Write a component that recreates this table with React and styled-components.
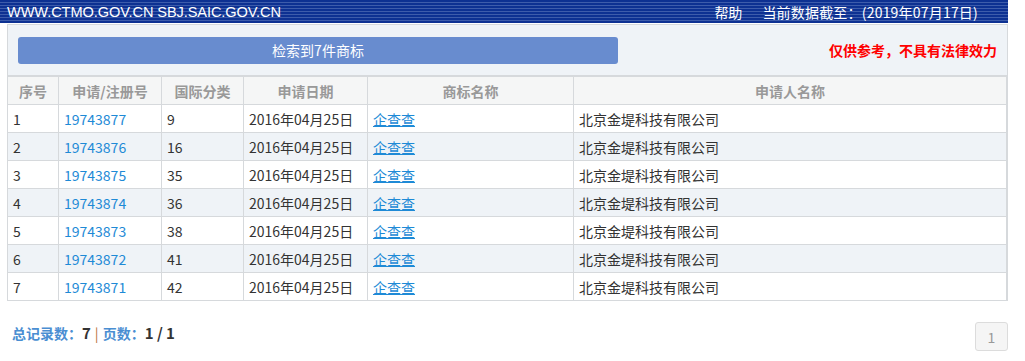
import React from "react";
import styled, { createGlobalStyle } from "styled-components";

const Global = createGlobalStyle`
  body {
    margin: 0;
    background: #fff;
    font-family: "Noto Sans CJK SC", "Liberation Sans", sans-serif;
    text-spacing-trim: space-all;
  }
`;

const Page = styled.div`
  width: 1008px;
`;

const TopBar = styled.div`
  height: 23px;
  display: flex;
  align-items: center;
  justify-content: space-between;
  padding: 0 30px 0 7px;
  color: #fff;
  background: repeating-linear-gradient(
    to bottom,
    #0d3192 0px,
    #0d3192 2px,
    #3d5cab 2px,
    #3d5cab 3px
  );
`;

const SiteName = styled.span`
  font-family: "Liberation Sans", Arial, sans-serif;
  font-size: 14.6px;
  letter-spacing: -0.1px;
`;

const TopRight = styled.div`
  display: flex;
  gap: 20px;
  font-size: 14px;
`;

const DateText = styled.span`
  letter-spacing: 0.2px;
`;

const Wrap = styled.div`
  margin-left: 7px;
  margin-top: 1px;
  border: 1px solid #d6d9dc;
  border-bottom: none;
`;

const SearchPanel = styled.div`
  height: 50px;
  background: #eff3f7;
  display: flex;
  align-items: center;
  justify-content: space-between;
  padding: 0 10px 0 10px;
  border-bottom: 1px solid #d6d9dc;
`;

const ResultButton = styled.div`
  width: 600px;
  height: 27px;
  border-radius: 3px;
  background: #688ccf;
  color: #fff;
  font-size: 14px;
  display: flex;
  align-items: center;
  justify-content: center;
`;

const Notice = styled.span`
  color: #f00;
  font-weight: bold;
  font-size: 14px;
`;

const Table = styled.table`
  table-layout: fixed;
  border-collapse: collapse;
  font-size: 14px;
  color: #333;
  margin-left: -1px;
  width: calc(100% + 1px);
`;

const Th = styled.th`
  height: 27px;
  border: 1px solid #d6d9dc;
  background: #f5f6f6;
  color: #999;
  font-weight: bold;
  text-align: center;
  padding: 0;
`;

const Tr = styled.tr`
  background: ${(p) => (p.$alt ? "#eff3f7" : "#fff")};
`;

const Td = styled.td`
  height: 27px;
  border: 1px solid #d6d9dc;
  padding: 0 0 0 5px;
  text-align: left;
`;

const NumLink = styled.span`
  color: #1e8ad6;
`;

const NameLink = styled.a`
  color: #1e8ad6;
  text-decoration: underline;
`;

const Footer = styled.div`
  display: flex;
  justify-content: space-between;
  align-items: flex-start;
  margin-top: 21px;
  padding-left: 12px;
`;

const Summary = styled.div`
  font-size: 14px;
  line-height: 22px;
  font-weight: bold;
  color: #4a8ed2;
`;

const Strong = styled.span`
  color: #333;
  font-size: 15px;
`;

const Sep = styled.span`
  color: #b8733a;
  font-weight: normal;
  margin: 0 4px;
`;

const PageBtn = styled.div`
  width: 31px;
  height: 27px;
  border: 1px solid #dcdcdc;
  border-radius: 3px;
  background: #f5f5f5;
  color: #999;
  font-size: 14px;
  display: flex;
  align-items: center;
  justify-content: center;
`;

const cols = [
  ["序号", 51],
  ["申请/注册号", 103],
  ["国际分类", 82],
  ["申请日期", 124],
  ["商标名称", 206],
  ["申请人名称", null],
];

const rows = [
  [1, "19743877", "9"],
  [2, "19743876", "16"],
  [3, "19743875", "35"],
  [4, "19743874", "36"],
  [5, "19743873", "38"],
  [6, "19743872", "41"],
  [7, "19743871", "42"],
];

export default function App() {
  return (
    <Page>
      <Global />
      <TopBar>
        <SiteName>WWW.CTMO.GOV.CN SBJ.SAIC.GOV.CN</SiteName>
        <TopRight>
          <span>帮助</span>
          <DateText>当前数据截至：(2019年07月17日)</DateText>
        </TopRight>
      </TopBar>
      <Wrap>
        <SearchPanel>
          <ResultButton>检索到7件商标</ResultButton>
          <Notice>仅供参考，不具有法律效力</Notice>
        </SearchPanel>
        <Table>
          <colgroup>
            {cols.map(([t, w]) => (
              <col key={t} style={w ? { width: w + "px" } : undefined} />
            ))}
          </colgroup>
          <thead>
            <tr>
              {cols.map(([t]) => (
                <Th key={t}>{t}</Th>
              ))}
            </tr>
          </thead>
          <tbody>
            {rows.map(([n, reg, cls], i) => (
              <Tr key={n} $alt={i % 2 === 1}>
                <Td>{n}</Td>
                <Td>
                  <NumLink>{reg}</NumLink>
                </Td>
                <Td>{cls}</Td>
                <Td>2016年04月25日</Td>
                <Td>
                  <NameLink href="#">企查查</NameLink>
                </Td>
                <Td>北京金堤科技有限公司</Td>
              </Tr>
            ))}
          </tbody>
        </Table>
      </Wrap>
      <Footer>
        <Summary>
          总记录数：<Strong>7</Strong>
          <Sep>|</Sep>页数：<Strong>1 / 1</Strong>
        </Summary>
        <PageBtn>1</PageBtn>
      </Footer>
    </Page>
  );
}
